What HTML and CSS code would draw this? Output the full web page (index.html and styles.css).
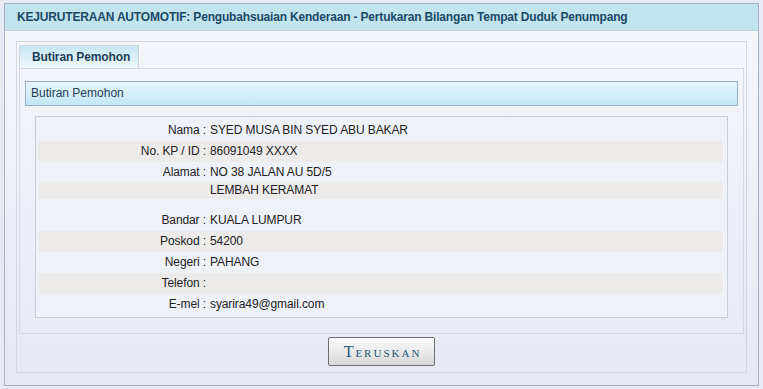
FILE: index.html
```html
<!DOCTYPE html>
<html>
<head>
<meta charset="utf-8">
<title>Butiran Pemohon</title>
<link rel="stylesheet" href="styles.css">
</head>
<body>
<div class="panel">
  <div class="panel-title">KEJURUTERAAN AUTOMOTIF: Pengubahsuaian Kenderaan - Pertukaran Bilangan Tempat Duduk Penumpang</div>
  <div class="tabs">
    <div class="tab-bar"><div class="tab">Butiran Pemohon</div></div>
    <div class="tab-body">
      <div class="section-bar">Butiran Pemohon</div>
      <div class="data-box">
        <div class="row"><span class="lbl">Nama :</span><span class="val">SYED MUSA BIN SYED ABU BAKAR</span></div>
        <div class="row alt"><span class="lbl">No. KP / ID :</span><span class="val">86091049 XXXX</span></div>
        <div class="row short-bottom"><span class="lbl">Alamat :</span><span class="val">NO 38 JALAN AU 5D/5</span></div>
        <div class="row alt small"><span class="lbl"></span><span class="val">LEMBAH KERAMAT</span></div>
        <div class="row blank"></div>
        <div class="row"><span class="lbl">Bandar :</span><span class="val">KUALA LUMPUR</span></div>
        <div class="row alt"><span class="lbl">Poskod :</span><span class="val">54200</span></div>
        <div class="row"><span class="lbl">Negeri :</span><span class="val">PAHANG</span></div>
        <div class="row alt"><span class="lbl">Telefon :</span><span class="val"></span></div>
        <div class="row"><span class="lbl">E-mel :</span><span class="val">syarira49@gmail.com</span></div>
      </div>
    </div>
    <div class="actions"><button class="btn" type="button">Teruskan</button></div>
  </div>
</div>
</body>
</html>
```
FILE: styles.css
```css
html, body {
  margin: 0;
  padding: 0;
}
body {
  background: #e7e9f4;
  font-family: "Liberation Sans", Arial, sans-serif;
  font-size: 12px;
  color: #222;
  padding: 3px 4px 3px 4px;
  width: 755px;
  box-sizing: content-box;
}
.panel {
  border: 1px solid #a5b2c6;
  background: linear-gradient(#f6f7fc, #e5e8f4);
  height: 381px;
  box-sizing: content-box;
}
.panel-title {
  height: 26px;
  line-height: 26px;
  padding-left: 12px;
  background: #c2e4ee;
  border-bottom: 1px solid #b5d6e0;
  color: #1c4866;
  font-weight: bold;
  letter-spacing: -0.18px;
  white-space: nowrap;
}
.tabs {
  margin: 10px 11px 0 11px;
  border: 1px solid #d3d7df;
  padding: 3px 2px 6px 2px;
}
.tab-bar {
  display: flex;
  height: 23px;
}
.tab {
  width: 106px;
  height: 22px;
  line-height: 22px;
  padding-left: 12px;
  border: 1px solid #cbd6de;
  border-bottom: none;
  background: linear-gradient(#c4e6f3, #f1f7fb);
  color: #1e3d58;
  font-weight: bold;
  letter-spacing: -0.12px;
}
.tab-body {
  border: 1px solid #d5d9e1;
  padding: 12px 5px 15px 5px;
}
.section-bar {
  height: 23px;
  line-height: 23px;
  padding-left: 5px;
  border: 1px solid #93afc1;
  background: linear-gradient(#e7f5fb, #c3e7f6);
  color: #1f3c57;
}
.data-box {
  margin: 10px 10px 0 10px;
  border: 1px solid #c9ccd2;
  background: #eff1f9;
  padding: 3px 4px 2px 2px;
}
.row {
  display: flex;
  height: 21px;
  line-height: 21px;
  letter-spacing: -0.1px;
}
.row.alt {
  background: #ecebea;
}
.row.short-bottom {
  height: 20px;
  line-height: 20px;
}
.row.small {
  height: 17px;
  line-height: 17px;
}
.row.blank {
  height: 11px;
}
.lbl {
  width: 168px;
  text-align: right;
  white-space: pre;
}
.val {
  padding-left: 4px;
}
.actions {
  display: flex;
  justify-content: center;
  padding-top: 3px;
}
.btn {
  width: 107px;
  height: 29px;
  border: 1px solid #6d6f73;
  border-radius: 2px;
  background: linear-gradient(#fbfbfb, #e9e9e9 55%, #d6d6d6);
  color: #1f5574;
  font-family: "Liberation Serif", "Times New Roman", serif;
  font-variant: small-caps;
  font-size: 16px;
  letter-spacing: 2px;
  padding: 0 0 0 2px;
  line-height: 27px;
}
```
